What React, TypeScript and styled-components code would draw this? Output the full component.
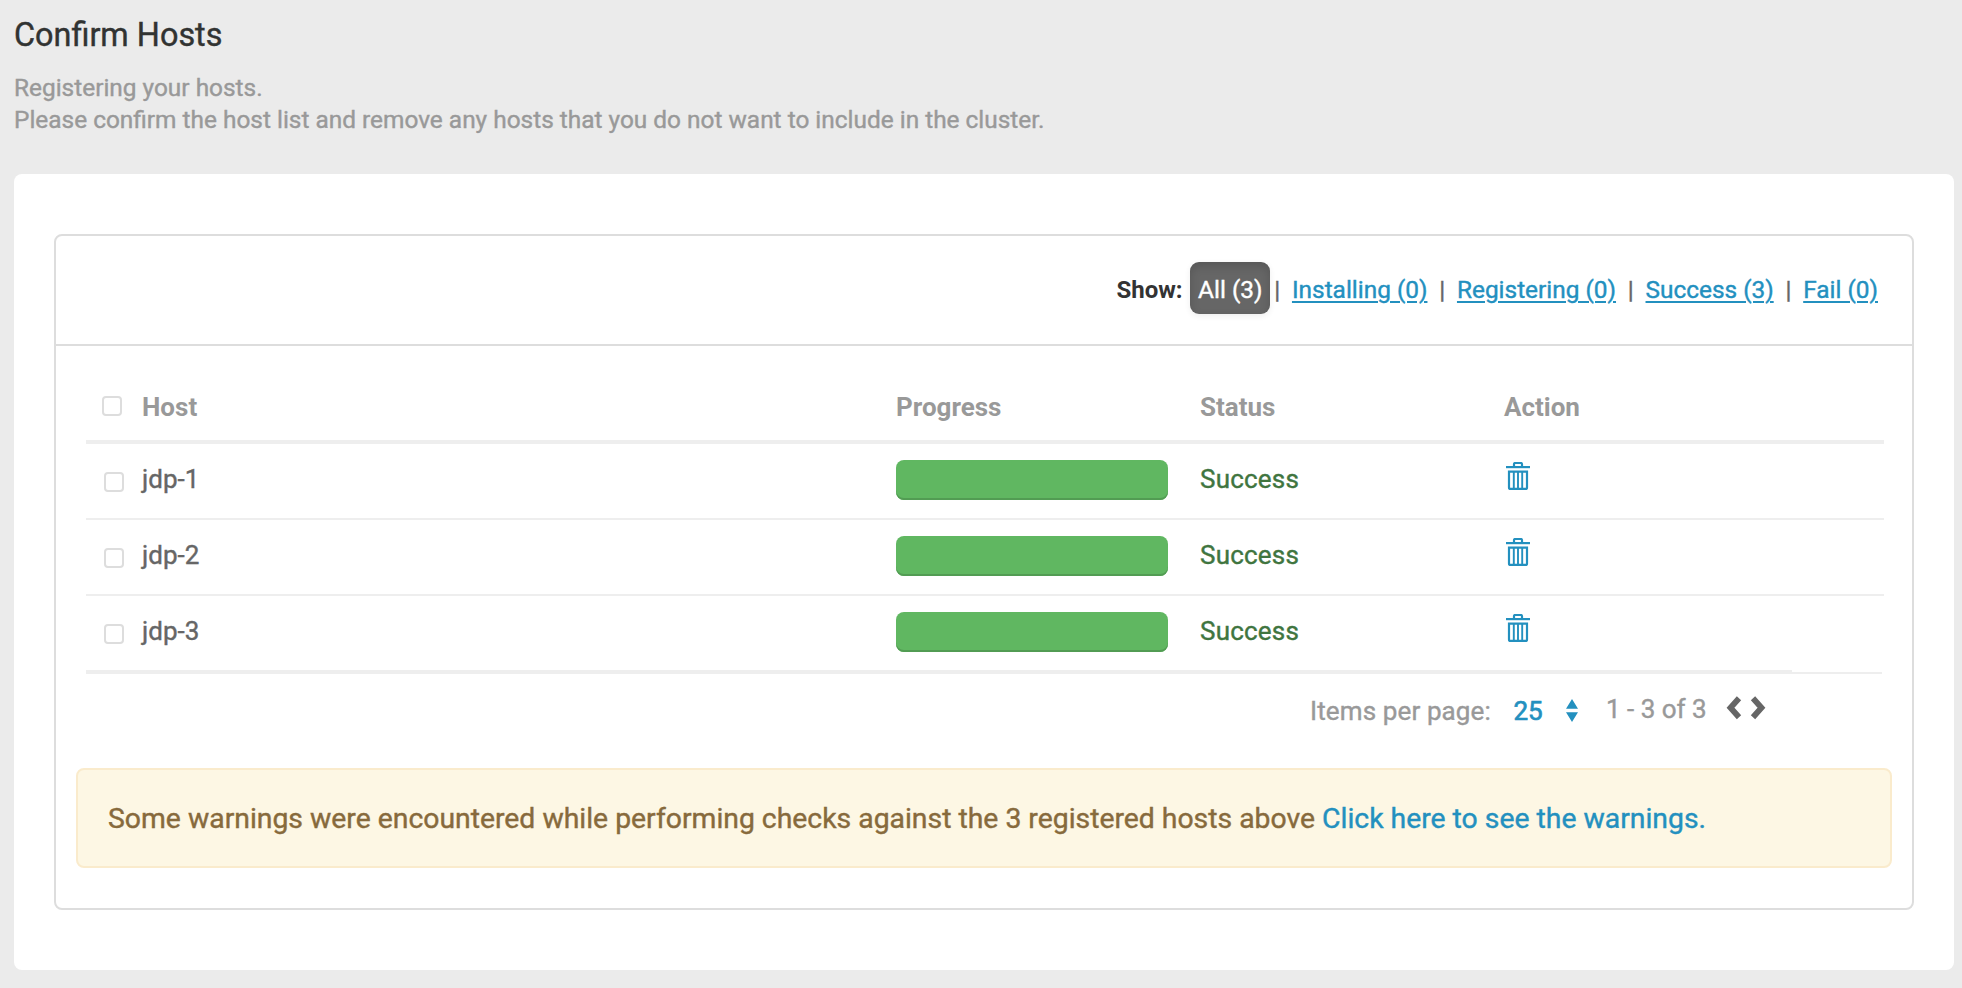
import React from "react";
import styled, { createGlobalStyle } from "styled-components";

const GlobalStyle = createGlobalStyle`
  * { box-sizing: border-box; }
  body {
    margin: 0;
    background: #ebebeb;
    font-family: Roboto, "Liberation Sans", sans-serif;
    color: #666;
    -webkit-text-stroke: 0.4px currentColor;
  }
`;

const Page = styled.main`
  display: flex;
  flex-direction: column;
  height: 988px;
  padding: 15px 8px 18px 14px;
  overflow: hidden;
`;

const Title = styled.h1`
  margin: 0;
  font-size: 32.4px;
  font-weight: 400;
  line-height: 40px;
  color: #313332;
`;

const Description = styled.p`
  margin: 17px 0 0;
  font-size: 24.42px;
  line-height: 32px;
  color: #999;
`;

const Card = styled.section`
  flex: 1;
  margin-top: 38px;
  padding: 60px 40px;
  border-radius: 8px;
  background: #fff;
`;

const Panel = styled.div`
  height: 676px;
  border: 2px solid #ddd;
  border-radius: 8px;
`;

const FilterBar = styled.nav`
  display: flex;
  align-items: flex-start;
  justify-content: flex-end;
  height: 110px;
  padding: 26px 26px 0 0;
  border-bottom: 2px solid #ddd;
  font-size: 24.4px;
  line-height: 55px;
`;

const FilterLabel = styled.span`
  margin-right: 7.5px;
  font-size: 24px;
  font-weight: 700;
  line-height: 56px;
  color: #333;
  -webkit-text-stroke-width: 0;
`;

const FilterLink = styled.a<{ $active?: boolean }>`
  height: 52px;
  padding: 0 8px;
  border-radius: 9px;
  color: ${(p) => (p.$active ? "#fff" : "#2390bf")};
  background: ${(p) => (p.$active ? "#666" : "transparent")};
  box-shadow: ${(p) =>
    p.$active ? "inset 0 4px 10px rgba(0,0,0,.15), 0 2px 6px rgba(0,0,0,.07)" : "none"};
  text-decoration: ${(p) => (p.$active ? "none" : "underline")};
  text-decoration-thickness: 2px;
  text-underline-offset: 3px;
`;

const Separator = styled.span`
  width: 13.5px;
  text-align: center;
`;

const Table = styled.div`
  width: 1798px;
  margin: 22px 0 0 30px;
  font-size: 26px;
  line-height: 36px;
`;

const Row = styled.div<{ $last?: boolean }>`
  display: grid;
  grid-template-columns: 40px 754px 304px 304px 1fr;
  height: ${(p) => (p.$last ? 74 : 76)}px;
  padding-top: 16px;
  border-bottom: ${(p) => (p.$last ? "none" : "2px solid #eee")};
`;

const HeaderRow = styled(Row)`
  padding-top: 20px;
  border-bottom-width: 4px;
  color: #999;
  font-weight: 700;
  -webkit-text-stroke-width: 0;
`;

const Cell = styled.div<{ $success?: boolean }>`
  padding: 1px 16px 0;
  color: ${(p) => (p.$success ? "#40753f" : "inherit")};
  letter-spacing: ${(p) => (p.$success ? "0.2px" : "normal")};
`;

const Checkbox = styled.button<{ $header?: boolean }>`
  width: 20px;
  height: 20px;
  margin: ${(p) => (p.$header ? "8px 0 0 16px" : "12px 0 0 18px")};
  padding: 0;
  border: 2px solid #ddd;
  border-radius: 4px;
  background: #fff;
`;

const Progress = styled.div`
  width: 272px;
  height: 40px;
  margin-left: 16px;
  border-radius: 8px;
  background: #60b761;
  box-shadow: inset 0 -2px 0 #529c53;
`;

const DeleteButton = styled.button`
  justify-self: start;
  align-self: start;
  display: flex;
  margin: 2px 0 0 18px;
  padding: 0;
  border: 0;
  background: none;
  color: #2390bf;
`;

const TableEnd = styled.div`
  width: 1706px;
  height: 2px;
  background: #eee;
`;

const Pager = styled.div`
  display: flex;
  align-items: flex-start;
  width: 1796px;
  height: 96px;
  padding: 18px 0 0 1224px;
  border-top: 2px solid #eee;
  color: #999;
`;

const ItemsLabel = styled.span`
  width: 203.5px;
  padding-top: 1px;
  letter-spacing: 0.12px;
`;

const PageSize = styled.span`
  display: flex;
  justify-content: space-between;
  width: 64.5px;
  margin-right: 28px;
  padding-top: 1px;
  color: #2390bf;
  -webkit-text-stroke-width: 0.7px;

  svg { margin-top: 6px; }
`;

const PageRange = styled.span`
  width: 120px;
  margin-top: -1px;
`;

const PageArrows = styled.span`
  display: flex;
  gap: 8px;
  padding-top: 4px;
  color: #666;
`;

const Warning = styled.div`
  height: 100px;
  margin: 0 20px;
  padding: 0 30px;
  border: 2px solid #faebcc;
  border-radius: 8px;
  background: #fdf7e4;
  font-size: 28.35px;
  line-height: 97px;
  white-space: nowrap;
  color: #876a3c;
`;

const WarningLink = styled.a`
  color: #2390bf;
`;

const TrashIcon = () => (
  <svg width="24" height="28" viewBox="0 0 24 28" fill="none" stroke="currentColor" strokeWidth="2.2">
    <path d="M0 5.1H24" />
    <path d="M8 4.5V2.2Q8 1 9.2 1H14.8Q16 1 16 2.2V4.5" />
    <path d="M3 9.6H21V25.4Q21 26.9 19.5 26.9H4.5Q3 26.9 3 25.4Z" />
    <path d="M7.8 10V26M12 10V26M16.2 10V26" strokeWidth="1.9" />
  </svg>
);

const SortIcon = () => (
  <svg width="12" height="23" viewBox="0 0 12 23" fill="currentColor">
    <path d="M6 0L12 9.8H0ZM6 23L12 13.3H0Z" />
  </svg>
);

const Chevron = ({ right }: { right?: boolean }) => (
  <svg width="16" height="24" viewBox="0 0 16 24" fill="none" stroke="currentColor" strokeWidth="5.8">
    <path d={right ? "M3 2.2L11.5 11.7L3 21.2" : "M13 2.2L4.5 11.7L13 21.2"} />
  </svg>
);

const filters = ["Installing (0)", "Registering (0)", "Success (3)", "Fail (0)"];
const hosts = ["jdp-1", "jdp-2", "jdp-3"];

export default function App() {
  return (
    <>
      <GlobalStyle />
      <Page>
        <Title>Confirm Hosts</Title>
        <Description>
          Registering your hosts.
          <br />
          Please confirm the host list and remove any hosts that you do not want to include in the cluster.
        </Description>
        <Card>
          <Panel>
            <FilterBar>
              <FilterLabel>Show:</FilterLabel>
              <FilterLink $active>All (3)</FilterLink>
              {filters.map((label) => (
                <React.Fragment key={label}>
                  <Separator>|</Separator>
                  <FilterLink>{label}</FilterLink>
                </React.Fragment>
              ))}
            </FilterBar>
            <Table>
              <HeaderRow>
                <Checkbox $header aria-label="Select all hosts" />
                <Cell>Host</Cell>
                <Cell>Progress</Cell>
                <Cell>Status</Cell>
                <Cell>Action</Cell>
              </HeaderRow>
              {hosts.map((host, i) => (
                <Row key={host} $last={i === hosts.length - 1}>
                  <Checkbox aria-label={`Select ${host}`} />
                  <Cell>{host}</Cell>
                  <Progress />
                  <Cell $success>Success</Cell>
                  <DeleteButton aria-label={`Remove ${host}`}>
                    <TrashIcon />
                  </DeleteButton>
                </Row>
              ))}
              <TableEnd />
              <Pager>
                <ItemsLabel>Items per page:</ItemsLabel>
                <PageSize>
                  25
                  <SortIcon />
                </PageSize>
                <PageRange>1 - 3 of 3</PageRange>
                <PageArrows>
                  <Chevron />
                  <Chevron right />
                </PageArrows>
              </Pager>
            </Table>
            <Warning>
              Some warnings were encountered while performing checks against the 3 registered hosts above{" "}
              <WarningLink>Click here to see the warnings.</WarningLink>
            </Warning>
          </Panel>
        </Card>
      </Page>
    </>
  );
}
